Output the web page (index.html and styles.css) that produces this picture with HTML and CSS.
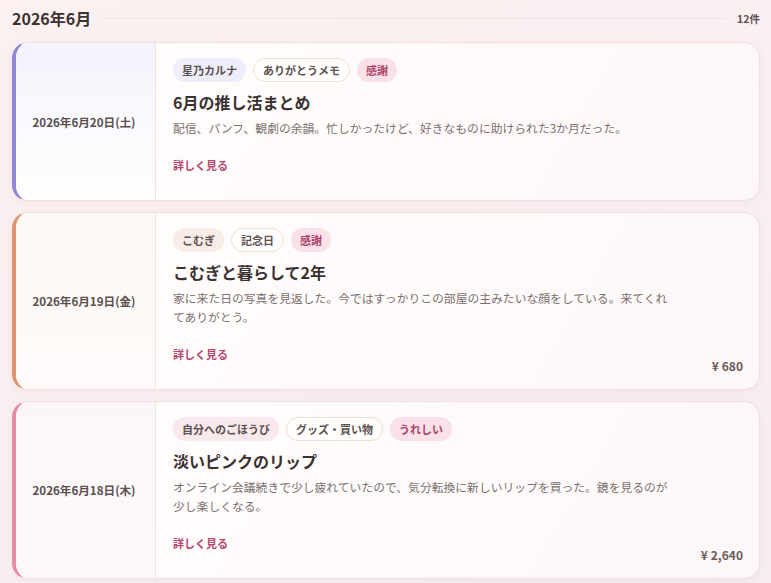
FILE: index.html
```html
<!DOCTYPE html>
<html lang="ja">
<head>
<meta charset="utf-8">
<link rel="stylesheet" href="styles.css">
</head>
<body>
<section class="month">
  <header class="month-head">
    <h2 class="month-title">2026年6月</h2>
    <span class="month-line"></span>
    <span class="month-count">12件</span>
  </header>

  <article class="card card-purple">
    <div class="date">2026年6月20日(土)</div>
    <div class="body">
      <div class="tags">
        <span class="tag tag-lavender">星乃カルナ</span>
        <span class="tag tag-outline">ありがとうメモ</span>
        <span class="tag tag-pink">感謝</span>
      </div>
      <h3 class="title">6月の推し活まとめ</h3>
      <p class="desc">配信、パンフ、観劇の余韻。忙しかったけど、好きなものに助けられた3か月だった。</p>
      <div class="foot">
        <a class="more">詳しく見る</a>
      </div>
    </div>
  </article>

  <article class="card card-orange">
    <div class="date">2026年6月19日(金)</div>
    <div class="body">
      <div class="tags">
        <span class="tag tag-beige">こむぎ</span>
        <span class="tag tag-outline">記念日</span>
        <span class="tag tag-pink">感謝</span>
      </div>
      <h3 class="title">こむぎと暮らして2年</h3>
      <p class="desc">家に来た日の写真を見返した。今ではすっかりこの部屋の主みたいな顔をしている。来てくれてありがとう。</p>
      <div class="foot">
        <a class="more">詳しく見る</a>
        <span class="price"><span class="yen">¥</span>680</span>
      </div>
    </div>
  </article>

  <article class="card card-pink">
    <div class="date">2026年6月18日(木)</div>
    <div class="body">
      <div class="tags">
        <span class="tag tag-rose">自分へのごほうび</span>
        <span class="tag tag-outline">グッズ・買い物</span>
        <span class="tag tag-pink">うれしい</span>
      </div>
      <h3 class="title">淡いピンクのリップ</h3>
      <p class="desc">オンライン会議続きで少し疲れていたので、気分転換に新しいリップを買った。鏡を見るのが少し楽しくなる。</p>
      <div class="foot">
        <a class="more">詳しく見る</a>
        <span class="price"><span class="yen">¥</span>2,640</span>
      </div>
    </div>
  </article>
</section>
</body>
</html>
```

FILE: styles.css
```css
* { box-sizing: border-box; }
html, body { height: 100%; }
body {
  margin: 0;
  padding: 8px 11px 0 12px;
  font-family: "Noto Sans CJK JP", "Noto Sans", sans-serif;
  background: linear-gradient(160deg, #fcf0f0 0%, #f9eff1 50%, #f7edf1 100%);
  color: #3a3232;
  overflow: hidden;
}
.month { display: flex; flex-direction: column; gap: 11px; }
.month-head {
  display: flex;
  align-items: center;
  gap: 12px;
  height: 20px;
  margin-bottom: 3px;
}
.month-title {
  margin: 0;
  font-size: 16px;
  line-height: 20px;
  font-weight: 700;
  color: #3b3232;
}
.month-line {
  flex: 1;
  height: 1px;
  background: #efe2e3;
}
.month-count {
  font-size: 10.5px;
  font-weight: 700;
  color: #5d5252;
}
.card {
  display: flex;
  background: linear-gradient(120deg, #fffefd 0%, #fffaf9 60%, #fdf7f7 100%);
  border: 1px solid #efdfe1;
  border-left-width: 4px;
  border-radius: 16px;
  box-shadow: 0 2px 10px rgba(200, 150, 160, 0.10);
  overflow: hidden;
}
.card-purple { border-left-color: #9088d6; }
.card-orange { border-left-color: #df9470; }
.card-pink { border-left-color: #e68aa6; }
.date {
  width: 140px;
  flex: none;
  display: flex;
  align-items: center;
  justify-content: center;
  padding-right: 3px;
  border-right: 1px solid #efe4e4;
  font-size: 11.6px;
  font-weight: 700;
  color: #5a5050;
}
.card-purple .date { background: linear-gradient(180deg, #f4f3fd 0%, #fbfafd 60%, #fffdfd 100%); }
.card-orange .date { background: linear-gradient(180deg, #fcf8f6 0%, #fdfaf9 100%); }
.card-pink .date { background: linear-gradient(180deg, #fcf6f7 0%, #fdf9f9 100%); }
.body {
  flex: 1;
  padding: 15px 16px 14px 17px;
  min-width: 0;
}
.tags { display: flex; gap: 7px; }
.tag {
  display: inline-flex;
  align-items: center;
  height: 24px;
  padding: 0 9px;
  border-radius: 12px;
  font-size: 11px;
  font-weight: 700;
  color: #5b5151;
}
.tag-lavender { background: #eeedf9; }
.tag-beige { background: #f7ece8; }
.tag-rose { background: #f9e9ec; }
.tag-outline { background: #fffefd; border: 1px solid #ebdfdc; }
.tag-pink { background: #fae0e7; color: #ad4468; }
.title {
  margin: 8px 0 0;
  font-size: 16px;
  line-height: 24px;
  font-weight: 700;
  color: #3a3232;
}
.desc {
  margin: 4px 0 0;
  max-width: 500px;
  font-size: 11.8px;
  line-height: 19px;
  color: #7a7070;
}
.foot {
  margin-top: 19px;
  display: flex;
  justify-content: space-between;
  align-items: flex-end;
}
.more {
  margin-bottom: 12px;
  font-size: 11px;
  line-height: 18px;
  font-weight: 700;
  color: #b5466f;
}
.price {
  font-size: 12px;
  line-height: 18px;
  font-weight: 700;
  color: #6a5b5b;
}
.yen { margin-right: 3px; }
```
